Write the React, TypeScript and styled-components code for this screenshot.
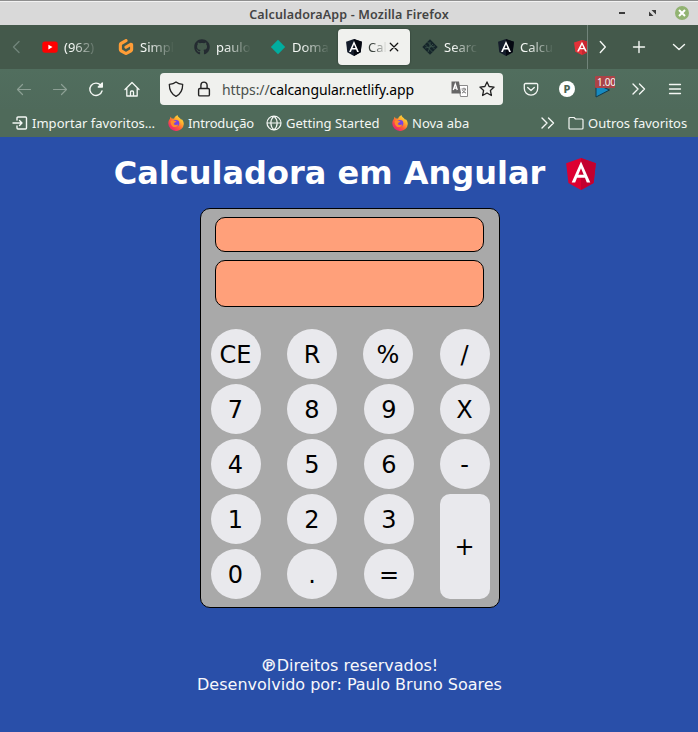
import React from 'react';
import styled, { createGlobalStyle } from 'styled-components';
import { FaGithub } from 'react-icons/fa';
import { SiGitpod } from 'react-icons/si';

const GlobalStyle = createGlobalStyle`
  * { box-sizing: border-box; }
  body { margin: 0; background: #294fa9; overflow: hidden; }
`;

const Window = styled.div`
  width: 698px;
  height: 732px;
  display: flex;
  flex-direction: column;
  font-family: 'Noto Sans', 'Open Sans', sans-serif;
  font-size: 13px;
  color: #f4f7f4;
  overflow: hidden;
  svg { display: block; flex: none; }
`;

const TitleBar = styled.header`
  height: 25px;
  flex: none;
  display: grid;
  grid-template-columns: 1fr 240px 1fr;
  align-items: center;
  background: #d9d9d9;
  border-top: 1px solid #8f8f8f;
  box-shadow: inset 0 1px 0 #f2f2f2;
`;
const WindowTitle = styled.div`
  grid-column: 2;
  padding-top: 3px;
  text-align: center;
  font-weight: 600;
  font-size: 12.5px;
  letter-spacing: 0.15px;
  color: #444;
  white-space: nowrap;
`;
const WindowControls = styled.div`
  display: flex;
  justify-content: flex-end;
  padding-right: 9px;
`;

const TabStrip = styled.nav`
  height: 44px;
  flex: none;
  display: flex;
  align-items: center;
  background: #44594b;
`;
const TabScroller = styled.div`
  width: 554px;
  height: 44px;
  display: flex;
  align-items: center;
  overflow: hidden;
  border-right: 1px solid #71847a;
`;
const Tab = styled.div<{ $active?: boolean }>`
  width: 72px;
  height: 36px;
  margin-right: 4px;
  padding-left: 8px;
  flex: none;
  display: flex;
  align-items: center;
  gap: 6px;
  border-radius: 4px;
  background: ${p => (p.$active ? '#f0f1ee' : 'transparent')};
  box-shadow: ${p => (p.$active ? '0 0 2px rgba(0,0,0,.4)' : 'none')};
  color: ${p => (p.$active ? '#3a423d' : '#f4f7f4')};
`;
const TabLabel = styled.span<{ $width: number }>`
  width: ${p => p.$width}px;
  overflow: hidden;
  white-space: nowrap;
  mask-image: linear-gradient(to right, #000 25%, transparent 100%);
`;
const IconSlot = styled.div<{ $width: number }>`
  width: ${p => p.$width}px;
  flex: none;
  display: flex;
  justify-content: center;
  align-items: center;
`;

const NavBar = styled.div`
  height: 40px;
  flex: none;
  display: flex;
  align-items: center;
  padding-left: 6px;
  background: linear-gradient(#516e5e, #4f6a5b);
`;
const UrlBar = styled.div`
  width: 343px;
  height: 32px;
  margin: 0 10px 0 10px;
  display: flex;
  align-items: center;
  border-radius: 4px;
  background: #f0f1ee;
  color: #000;
`;
const Url = styled.div`
  flex: 1;
  padding-left: 5px;
  font-size: 14px;
  letter-spacing: -0.09px;
  white-space: nowrap;
`;
const Scheme = styled.span`
  color: #4a504c;
`;
const AccountBadge = styled.div`
  width: 16px;
  height: 16px;
  border-radius: 50%;
  background: #fff;
  color: #4b6355;
  font-size: 11px;
  line-height: 16px;
  font-weight: 800;
  text-align: center;
`;
const Extension = styled.div`
  position: relative;
  width: 20px;
  height: 22px;
  padding-top: 5px;
`;
const ExtensionBadge = styled.div`
  position: absolute;
  top: -2px;
  left: 0;
  width: 20px;
  height: 12px;
  padding-left: 2px;
  overflow: hidden;
  border-radius: 1px;
  background: #ac4347;
  font-size: 10px;
  line-height: 12px;
  letter-spacing: -0.3px;
`;

const BookmarkBar = styled.div`
  height: 28px;
  flex: none;
  display: flex;
  align-items: center;
  background: #4f6a5a;
`;
const Bookmark = styled.div<{ $start: number; $width: number; $spacing?: number }>`
  width: ${p => p.$width}px;
  margin-left: ${p => p.$start}px;
  display: flex;
  align-items: center;
  gap: 4px;
  white-space: nowrap;
  letter-spacing: ${p => p.$spacing ?? 0}px;
`;

const Page = styled.main`
  flex: 1;
  display: flex;
  flex-direction: column;
  align-items: center;
  background: #294fa9;
  font-family: 'DejaVu Sans', sans-serif;
`;
const Heading = styled.h1`
  height: 71px;
  margin: 0;
  padding: 2px 0 0 12px;
  display: flex;
  align-items: center;
  gap: 21px;
  font-size: 32px;
  line-height: 37px;
  font-weight: 700;
  color: #fff;
  white-space: nowrap;
`;
const Calculator = styled.section`
  width: 300px;
  height: 400px;
  margin-left: 2px;
  padding: 8px 9px 8px 10px;
  display: flex;
  flex-direction: column;
  border: 1px solid #000;
  border-radius: 10px;
  background: #a9a9a9;
`;
const Display = styled.div<{ $height: number }>`
  width: 269px;
  height: ${p => p.$height}px;
  margin: 0 0 8px 4px;
  border: 1px solid #000;
  border-radius: 10px;
  background: #ffa07a;
`;
const Keypad = styled.div`
  margin-top: 14px;
  display: grid;
  grid-template-columns: 76px 77px 76px 50px;
  grid-auto-rows: 50px;
  row-gap: 5px;
`;
const Key = styled.button<{ $tall?: boolean; $nudge?: boolean; $inner?: boolean }>`
  width: 50px;
  height: ${p => (p.$tall ? 105 : 50)}px;
  grid-row: ${p => (p.$tall ? 'span 2' : 'auto')};
  margin: 0 0 0 ${p => (p.$nudge ? -1 : 0)}px;
  padding: ${p => (p.$tall ? 0 : 2)}px ${p => (p.$inner ? 0 : 1)}px 0 0;
  border: 0;
  border-radius: ${p => (p.$tall ? '10px' : '50%')};
  background: #e9e9ed;
  color: #000;
  font: 24px 'DejaVu Sans', sans-serif;
`;
const Footer = styled.footer`
  margin: 48px 0 0 1px;
  text-align: center;
  font-size: 16px;
  line-height: 19px;
  color: #f7f7fb;
`;
const Mark = styled.span`
  -webkit-text-stroke: 0.5px #f7f7fb;
`;

type LineProps = { d: string; size?: number; color?: string; width?: number; view?: number };
const Line = ({ d, size = 16, color = '#f4f7f4', width = 1.4, view = 16 }: LineProps) => (
  <svg width={size} height={size} viewBox={`0 0 ${view} ${view}`} fill="none" stroke={color}
    strokeWidth={width} strokeLinecap="round" strokeLinejoin="round"><path d={d} /></svg>
);

const AngularLogo = ({ w, h, left, right }: { w: number; h: number; left: string; right: string }) => (
  <svg width={w} height={h} viewBox="31 30 188 200" preserveAspectRatio="none">
    <path fill={left} d="M125 30 31.9 63.2l14.2 123.1L125 230l78.9-43.7 14.2-123.1z" />
    <path fill={right} d="M125 30v200l78.9-43.7 14.2-123.1z" />
    <path fill="#fff" d="M125 52.1 66.8 182.6h21.7l11.7-29.2h49.4l11.7 29.2H183zm17 83.3h-34l17-40.9z" />
  </svg>
);

const Firefox = ({ id }: { id: string }) => (
  <svg width="16" height="16" viewBox="0 0 16 16">
    <defs>
      <linearGradient id={id} x1="1" y1="0" x2=".2" y2="1">
        <stop offset="0" stopColor="#fff44f" /><stop offset=".35" stopColor="#ffb52e" />
        <stop offset=".65" stopColor="#ff5a36" /><stop offset="1" stopColor="#e31587" />
      </linearGradient>
    </defs>
    <path fill={`url(#${id})`} d="M9.500 0c.2 1.800 1.700 2.500 2.700 3.600.5.500.8 1 .9 1.400.3-.4.4-.7.4-1.100C15 5.200 15.800 7 15.800 9A7.400 7.400 0 0 1 8 16 7.600 7.600 0 0 1 .3 8.500c0-2 .7-3.700 1.700-4.800.1-.8.6-1.600 1-1.900 0 .8.3 1.300.6 1.700.8-.2 1.700-.1 2.400.2C6.500 2 8 .7 9.500 0z" />
    <circle cx="8" cy="8.300" r="3.300" fill="#7542e5" />
    <path fill="#ff8a2a" d="M2.600 6c1.500-1 3-.9 4.300.1l1.600.2c-.2.900-1.700 1-2 1.500-.1.500-.5.900-.9 1.100 1.200 1.300 3.200 1.200 4.800.3-.8 2.300-2.900 3.400-4.900 2.700C3.300 11.200 2.400 8.400 2.600 6z" />
  </svg>
);

const Tabs = () => (
  <TabStrip>
    <IconSlot $width={34}><Line color="#71847a" d="M10 2.500 4.500 8l5.500 5.500" /></IconSlot>
    <TabScroller>
      <Tab>
        <svg width="16" height="16" viewBox="0 0 16 16"><rect y="2.500" x=".3" width="15.400" height="11.200" rx="2.600" fill="#f00" /><path fill="#fff" d="m6.400 5.700 4.100 2.400-4.100 2.400z" /></svg>
        <TabLabel $width={34}>(962)</TabLabel>
      </Tab>
      <Tab><SiGitpod size={16} color="#ff9d36" /><TabLabel $width={34}>Simpl</TabLabel></Tab>
      <Tab><FaGithub size={16} color="#242b31" /><TabLabel $width={35}>paulo</TabLabel></Tab>
      <Tab>
        <svg width="16" height="16" viewBox="0 0 16 16"><path fill="#00ad9f" d="m8 .8 7.200 7.200L8 15.200.8 8z" /></svg>
        <TabLabel $width={38}>Doma</TabLabel>
      </Tab>
      <Tab $active>
        <AngularLogo w={16} h={17} left="#151d2b" right="#050811" />
        <TabLabel $width={19}>Cal</TabLabel>
        <IconSlot $width={2}><Line size={10} color="#111" width={2} d="m2 2 12 12M14 2 2 14" /></IconSlot>
      </Tab>
      <Tab>
        <svg width="16" height="16" viewBox="0 0 16 16">
          <path fill="#15252a" d="m8 .3 7.700 7.700L8 15.700.3 8z" />
          <path stroke="#3c554b" strokeWidth=".8" fill="none" d="m5.500 3 7.500 7.500M3 5.500l7.500 7.500M8 3v5l-5 1m5-1 5-1M8 8l-2 5m2-5 3-3" />
        </svg>
        <TabLabel $width={34}>Searc</TabLabel>
      </Tab>
      <Tab><AngularLogo w={16} h={17} left="#151d2b" right="#050811" /><TabLabel $width={34}>Calcu</TabLabel></Tab>
      <Tab><AngularLogo w={16} h={15} left="#e53138" right="#c72831" /></Tab>
    </TabScroller>
    <IconSlot $width={30}><Line d="m5.300 2.500 5 5.500-5 5.500" /></IconSlot>
    <IconSlot $width={41}><Line d="M8 2.500v11M2.500 8h11" /></IconSlot>
    <IconSlot $width={39}><Line d="m2.500 5.500 5.500 5 5.500-5" /></IconSlot>
  </TabStrip>
);

const Navigation = () => (
  <NavBar>
    <IconSlot $width={36}><Line color="#8c9f94" width={1.200} d="M14.500 8.500H1.500m5-5-5 5 5 5" /></IconSlot>
    <IconSlot $width={36}><Line color="#8c9f94" width={1.200} d="M1.500 8.500h13m-5-5 5 5-5 5" /></IconSlot>
    <IconSlot $width={36}><Line d="M14 10a6.200 6.200 0 1 1-1.300-5.800L14 5.500M14.300 2v4h-4zM14 3l-3 3" /></IconSlot>
    <IconSlot $width={36}><Line width={1.300} d="m1 8.500 7-7 7 7M2.800 7v8h10.400V7M6.500 15v-4a1 1 0 0 1 1-1h1a1 1 0 0 1 1 1v4" /></IconSlot>
    <UrlBar>
      <IconSlot $width={32}><Line color="#222" width={1.300} d="M8 .9c2 1.700 4.200 2.200 6.700 2.400 0 5.500-1.700 9.700-6.700 12C3 13 1.300 8.800 1.300 3.300 3.800 3.100 6 2.600 8 .9z" /></IconSlot>
      <IconSlot $width={24}><Line color="#222" width={1.400} d="M3.800 7.500h8.400a1.200 1.200 0 0 1 1.200 1.200v5a1.200 1.200 0 0 1-1.200 1.200H3.800a1.200 1.200 0 0 1-1.200-1.200v-5a1.200 1.200 0 0 1 1.200-1.200zM4.900 7V4.200a3.100 3.100 0 0 1 6.200 0V7" /></IconSlot>
      <IconSlot $width={1} />
      <Url><Scheme>https://</Scheme>calcangular.netlify.app</Url>
      <IconSlot $width={20}>
        <svg width="17" height="17" viewBox="0 0 17 17">
          <path fill="#fff" stroke="#8b8b8b" d="M7.500 4.500h9v11h-7z" />
          <path stroke="#777" fill="none" d="M10.500 8h4.500m-2-1.300V8m1.500 0c-.5 2-1.500 3.200-3.500 4m.5-3c.8 1.500 1.800 2.500 3.500 3" />
          <path fill="#666" d="M.5.500h7.500l2 12H.5z" />
          <path stroke="#fff" strokeWidth="1.300" fill="none" d="m2.300 9 2-6 2 6M3 7.200h2.700" />
        </svg>
      </IconSlot>
      <IconSlot $width={2} />
      <IconSlot $width={32}><Line color="#222" width={1.300} d="m8 .9 2.100 4.600 5 .6-3.700 3.400 1 5L8 12l-4.400 2.500 1-5L.9 6.100l5-.6z" /></IconSlot>
    </UrlBar>
    <IconSlot $width={36}><Line width={1.300} d="M2.500 2.500h11A1.200 1.200 0 0 1 14.700 3.700V7.500a6.700 6.700 0 0 1-13.400 0V3.700A1.200 1.200 0 0 1 2.500 2.500zM4.700 6.500 8 9.500l3.300-3" /></IconSlot>
    <IconSlot $width={36}><AccountBadge>P</AccountBadge></IconSlot>
    <IconSlot $width={40}>
      <Extension>
        <svg width="15" height="16" viewBox="0 0 15 16"><path fill="#168ac0" stroke="#12394b" d="M1 1v13l13.500-7z" /></svg>
        <ExtensionBadge>1.00</ExtensionBadge>
      </Extension>
    </IconSlot>
    <IconSlot $width={28}><Line d="m2 3 5 5-5 5M8.500 3l5 5-5 5" /></IconSlot>
    <IconSlot $width={44}><Line width={1.300} d="M2.500 3.500h11M2.500 8h11M2.500 12.500h11" /></IconSlot>
  </NavBar>
);

const Bookmarks = () => (
  <BookmarkBar>
    <Bookmark $start={12} $width={143} $spacing={0.03}>
      <Line d="M5 5V3a1 1 0 0 1 1-1h7.500a1 1 0 0 1 1 1v10a1 1 0 0 1-1 1H6a1 1 0 0 1-1-1v-2M1 8h9M7.500 5.500 10 8l-2.500 2.500" />
      Importar favoritos…
    </Bookmark>
    <Bookmark $start={13} $width={85} $spacing={-0.15}><Firefox id="fx-intro" />Introdução</Bookmark>
    <Bookmark $start={13} $width={113}>
      <Line width={1.200} d="M8 1a7 7 0 1 1 0 14A7 7 0 0 1 8 1zM8 1C3.800 5 3.800 11 8 15c4.200-4 4.200-10 0-14zM1 8h14" />
      Getting Started
    </Bookmark>
    <Bookmark $start={13} $width={75}><Firefox id="fx-new" />Nova aba</Bookmark>
    <Bookmark $start={73} $width={16}><Line d="m2 3 5 5-5 5M8.500 3l5 5-5 5" /></Bookmark>
    <Bookmark $start={12} $width={120}>
      <Line width={1.200} d="M2 2.500h4L7.500 4H14a1 1 0 0 1 1 1v8a1 1 0 0 1-1 1H2a1 1 0 0 1-1-1V3.500a1 1 0 0 1 1-1z" />
      Outros favoritos
    </Bookmark>
  </BookmarkBar>
);

const keys = ['CE', 'R', '%', '/', '7', '8', '9', 'X', '4', '5', '6', '-', '1', '2', '3', '+', '0', '.', '='];
const innerKeys = ['R', '%', '8', '9', '5', '6', '2', '3', '.', '='];

export default function App() {
  return (
    <>
      <GlobalStyle />
      <Window>
        <TitleBar>
          <WindowTitle>CalculadoraApp - Mozilla Firefox</WindowTitle>
          <WindowControls>
            <svg width="74" height="14" viewBox="0 0 74 14">
              <path fill="#3b3b3b" d="M4 6h6v2H4zM36.500 4H41v4.500zM34 5.500V10h4.500z" />
              <circle cx="67" cy="7" r="7" fill="#92b372" />
              <path stroke="#fff" strokeWidth="2" d="m64 4 6 6m0-6-6 6" />
            </svg>
          </WindowControls>
        </TitleBar>
        <Tabs />
        <Navigation />
        <Bookmarks />
        <Page>
          <Heading>Calculadora em Angular<AngularLogo w={30} h={32} left="#dd0031" right="#c3002f" /></Heading>
          <Calculator>
            <Display $height={35} />
            <Display $height={47} />
            <Keypad>
              {keys.map(k => (
                <Key key={k} $tall={k === '+'} $nudge={k === '%'} $inner={innerKeys.includes(k)}>{k}</Key>
              ))}
            </Keypad>
          </Calculator>
          <Footer><Mark>℗</Mark>Direitos reservados!<br />Desenvolvido por: Paulo Bruno Soares</Footer>
        </Page>
      </Window>
    </>
  );
}
